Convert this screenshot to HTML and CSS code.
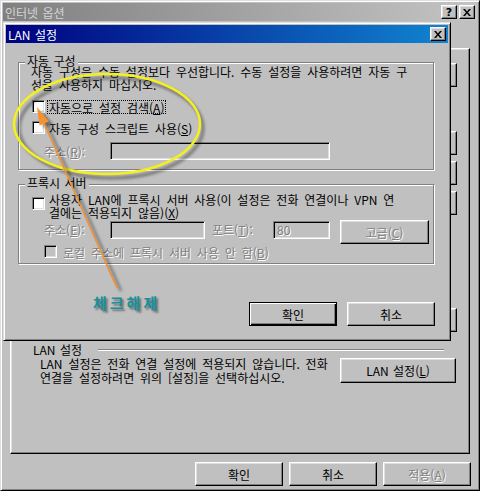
FILE: index.html
```html
<!DOCTYPE html>
<html lang="ko">
<head>
<meta charset="utf-8">
<title>LAN 설정</title>
<link rel="stylesheet" href="styles.css">
</head>
<body>
<div class="desk">
  <div class="win outer">
    <div class="title inactive">
      <span class="ttext">인터넷 옵션</span>
      <div class="tbtns">
        <span class="cbtn q">?</span>
        <span class="cbtn"><svg width="8" height="7" viewBox="0 0 8 7"><path d="M0 0h2l2 2.5L6 0h2L5 3.5 8 7H6L4 4.5 2 7H0l3-3.5z"/></svg></span>
      </div>
    </div>
    <div class="obody">
      <div class="tabstrip"></div>
      <div class="panel">
        <div class="hidcol">
          <div class="btn hb"></div>
          <div class="btn hb m44"></div>
          <div class="btn hb m6"></div>
          <div class="btn hb m6"></div>
          <div class="btn hb m93"></div>
        </div>
        <div class="lanhead"><span class="lanlegend">LAN 설정</span><div class="etch"></div></div>
        <div class="lanrow">
          <p class="lantext">LAN 설정은 전화 연결 설정에 적용되지 않습니다. 전화<br>연결을 설정하려면 위의 [설정]을 선택하십시오.</p>
          <div class="btn lanbtn">LAN 설정(<u>L</u>)</div>
        </div>
      </div>
      <div class="footer">
        <div class="btn fbtn">확인</div>
        <div class="btn fbtn">취소</div>
        <div class="btn fbtn dis">적용(<u>A</u>)</div>
      </div>
    </div>
  </div>

  <div class="win dialog">
    <div class="title active">
      <span class="ttext">LAN 설정</span>
      <div class="tbtns">
        <span class="cbtn"><svg width="8" height="7" viewBox="0 0 8 7"><path d="M0 0h2l2 2.5L6 0h2L5 3.5 8 7H6L4 4.5 2 7H0l3-3.5z"/></svg></span>
      </div>
    </div>
    <div class="dbody">
      <div class="group g1">
        <span class="legend">자동 구성</span>
        <p class="desc">자동 구성은 수동 설정보다 우선합니다. 수동 설정을 사용하려면 자동 구<br>성을 사용하지 마십시오.</p>
        <div class="cbrow r1"><span class="cb"></span><span class="cblabel focus">자동으로 설정 검색(<u>A</u>)</span></div>
        <div class="cbrow r2"><span class="cb"></span><span class="cblabel">자동 구성 스크립트 사용(<u>S</u>)</span></div>
        <div class="addr a1">
          <span class="flabel dis wlab">주소(<u>R</u>):</span>
          <span class="field w220"></span>
        </div>
      </div>
      <div class="group g2">
        <span class="legend">프록시 서버</span>
        <div class="cbrow p1"><span class="cb top"></span><span class="cblabel">사용자 LAN에 프록시 서버 사용(이 설정은 전화 연결이나 VPN 연<br>결에는 적용되지 않음)(<u>X</u>)</span></div>
        <div class="addr a2">
          <span class="flabel dis wlab">주소(<u>E</u>):</span>
          <span class="field w95"></span>
          <span class="flabel dis port">포트(<u>T</u>):</span>
          <span class="field w57 dis">80</span>
          <div class="btn adv dis">고급(<u>C</u>)</div>
        </div>
        <div class="cbrow r3"><span class="cb off"></span><span class="cblabel dis">로컬 주소에 프록시 서버 사용 안 함(<u>B</u>)</span></div>
      </div>
      <div class="dbtns">
        <div class="btn dbtn default">확인</div>
        <div class="btn dbtn">취소</div>
      </div>
    </div>
  </div>

  <svg class="annot" width="482" height="497" viewBox="0 0 482 497">
    <defs>
      <filter id="soft" x="-20%" y="-20%" width="140%" height="140%"><feGaussianBlur stdDeviation="1.6"/></filter>
    </defs>
    <ellipse cx="111" cy="128" rx="92" ry="50" fill="none" stroke="#000" stroke-opacity=".4" stroke-width="3" filter="url(#soft)"/>
    <ellipse cx="107" cy="124" rx="93" ry="50" fill="none" stroke="#f4f01c" stroke-width="2.5"/>
    <g transform="translate(4 3)" filter="url(#soft)" opacity=".45">
      <line x1="117" y1="288" x2="44" y2="123" stroke="#000" stroke-width="2"/>
      <polygon points="37,107 49,121.5 39.5,125.5" fill="#000"/>
    </g>
    <line x1="117" y1="288" x2="44" y2="123" stroke="#f39230" stroke-width="1.6"/>
    <polygon points="37,107 49,121.5 39.5,125.5" fill="#f39230"/>
  </svg>
  <div class="note">체크해제</div>
</div>
</body>
</html>
```

FILE: styles.css
```css
html, body {
  margin: 0;
  padding: 0;
  background: #ffffff;
}

.desk {
  position: relative;
  width: 482px;
  height: 497px;
  overflow: hidden;
  font-family: "Noto Sans CJK KR", "Liberation Sans", sans-serif;
  font-size: 12px;
  line-height: 13px;
  color: #000;
  word-spacing: 2.5px;
}

p { margin: 0; }

.win {
  box-sizing: border-box;
  background: #c0c0c0;
  border: 1px solid;
  border-color: #dfdfdf #000 #000 #dfdfdf;
  box-shadow: inset 1px 1px #fff, inset -1px -1px #808080;
  padding: 2px;
  display: flex;
  flex-direction: column;
}

.outer {
  width: 480px;
  height: 491px;
}

.dialog {
  position: absolute;
  left: 3px;
  top: 22px;
  width: 448px;
  height: 319px;
}

.title {
  height: 18px;
  flex: none;
  display: flex;
  align-items: center;
  padding: 0 2px;
  white-space: nowrap;
  word-spacing: 1px;
}

.inactive {
  background: linear-gradient(to right, #808080, #c4c4c4);
  color: #d4d4d4;
}

.active {
  background: linear-gradient(to right, #000080, #1084d0);
  color: #fff;
}

.ttext { flex: 1; }

.tbtns {
  display: flex;
  gap: 2px;
}

.cbtn {
  box-sizing: border-box;
  width: 16px;
  height: 14px;
  background: #c0c0c0;
  border: 1px solid;
  border-color: #fff #000 #000 #fff;
  box-shadow: inset -1px -1px #808080, inset 1px 1px #dfdfdf;
  display: flex;
  align-items: center;
  justify-content: center;
  color: #000;
}

.cbtn svg { display: block; fill: #000; }

.cbtn.q {
  font-family: "DejaVu Sans", sans-serif;
  font-weight: bold;
  font-size: 11px;
  line-height: 11px;
}

/* outer window body */
.obody {
  flex: 1;
  display: flex;
  flex-direction: column;
  padding: 0 7px 2px 7px;
}

.tabstrip {
  height: 27px;
  flex: none;
}

.panel {
  flex: 1;
  box-sizing: border-box;
  border: 1px solid;
  border-color: #fff #000 #000 #fff;
  box-shadow: inset -1px -1px #808080, inset 1px 1px #dfdfdf;
  padding: 14px 12px 0 22px;
  display: flex;
  flex-direction: column;
}

.hidcol {
  align-self: flex-end;
  display: flex;
  flex-direction: column;
}

.btn {
  box-sizing: border-box;
  background: #c0c0c0;
  border: 1px solid;
  border-color: #fff #000 #000 #fff;
  box-shadow: inset -1px -1px #808080, inset 1px 1px #dfdfdf;
  display: flex;
  align-items: center;
  justify-content: center;
  white-space: nowrap;
  word-spacing: 1px;
}

.hb { width: 88px; height: 24px; }
.m44 { margin-top: 44px; }
.m6 { margin-top: 6px; }
.m93 { margin-top: 93px; }

.lanhead {
  display: flex;
  margin-top: 11px;
  height: 13px;
}

.lanlegend {
  width: 65px;
  white-space: nowrap;
  word-spacing: 1px;
}

.etch {
  flex: 1;
  height: 0;
  margin: 6px 13px 0 0;
  border-top: 1px solid #808080;
  border-bottom: 1px solid #fff;
}

.lanrow {
  display: flex;
  margin-top: 1px;
}

.lantext {
  flex: 1;
  margin-left: 7px;
  line-height: 14px;
  white-space: nowrap;
}

.lanbtn {
  width: 116px;
  height: 25px;
  margin: 1px 1px 0 0;
}

.footer {
  display: flex;
  justify-content: flex-end;
  gap: 6px;
  margin: 8px -1px 0 0;
}

.fbtn { width: 88px; height: 24px; }

.dis {
  color: #808080;
  text-shadow: 1px 1px 0 #fff;
}

/* dialog body */
.dbody {
  flex: 1;
  display: flex;
  flex-direction: column;
  padding-left: 12px;
}

.group {
  box-sizing: border-box;
  width: 416px;
  border: 1px solid #808080;
  box-shadow: inset 1px 1px #fff, 1px 1px #fff;
  padding: 0 0 0 12px;
  display: flex;
  flex-direction: column;
  white-space: nowrap;
}

.g1 {
  margin-top: 19px;
  padding-bottom: 9px;
}

.g2 {
  margin-top: 14px;
  padding-bottom: 4px;
}

.legend {
  align-self: flex-start;
  margin: -9px 0 0 -6px;
  padding: 0 2px;
  background: #c0c0c0;
  word-spacing: 1px;
}

.desc { margin-top: -2px; }

.cbrow {
  display: flex;
  align-items: flex-start;
}

.r1 { margin-top: 9px; }
.r2 { margin-top: 7px; }
.p1 { margin-top: 3px; }
.r3 { margin-top: 1px; padding-left: 13px; }

.cb {
  box-sizing: border-box;
  width: 13px;
  height: 13px;
  flex: none;
  margin-left: 1px;
  background: #fff;
  border: 1px solid;
  border-color: #808080 #fff #fff #808080;
  box-shadow: inset 1px 1px #000, inset -1px -1px #dfdfdf;
}

.cb.top { margin-top: 5px; }
.cb.off { background: #c0c0c0; margin-left: 0; }

.cblabel {
  margin-left: 2px;
  padding: 1px 1px 0 1px;
  border: 1px solid transparent;
  line-height: 11px;
}

.p1 .cblabel { line-height: 13px; padding-top: 0; }
.r3 .cblabel { margin-left: 4px; }

.cblabel.focus { border: 1px dotted #000; }

.addr {
  display: flex;
  align-items: flex-start;
}

.a1 { margin-top: 7px; }
.a2 { margin-top: 0; }

.flabel {
  box-sizing: border-box;
  padding-left: 13px;
  margin-top: 3px;
  word-spacing: 0;
}

.wlab { width: 79px; }

.port {
  padding-left: 0;
  width: 61px;
  margin-left: 7px;
}

.field {
  box-sizing: border-box;
  height: 18px;
  background: #c0c0c0;
  border: 1px solid;
  border-color: #808080 #fff #fff #808080;
  box-shadow: inset 1px 1px #000, inset -1px -1px #dfdfdf;
  padding: 2px 3px;
  line-height: 12px;
}

.a2 .field { margin-top: 1px; }

.w220 { width: 220px; }
.w95 { width: 95px; }
.w57 { width: 57px; }

.adv {
  width: 89px;
  height: 24px;
  margin-left: 10px;
}

.dbtns {
  display: flex;
  justify-content: flex-end;
  gap: 10px;
  margin-top: 38px;
  padding-right: 13px;
}

.dbtn { width: 88px; height: 24px; }

.btn.default {
  border-color: #000;
  box-shadow: inset 1px 1px #fff, inset -1px -1px #000, inset -2px -2px #808080;
}

/* annotations */
.annot {
  position: absolute;
  left: 0;
  top: 0;
  pointer-events: none;
}

.note {
  position: absolute;
  left: 93px;
  top: 295px;
  font-weight: bold;
  font-size: 15px;
  line-height: 16px;
  letter-spacing: 3px;
  word-spacing: 0;
  color: #16909a;
  text-shadow: 2px 2px 2px rgba(0, 0, 0, 0.45);
  white-space: nowrap;
}
```
